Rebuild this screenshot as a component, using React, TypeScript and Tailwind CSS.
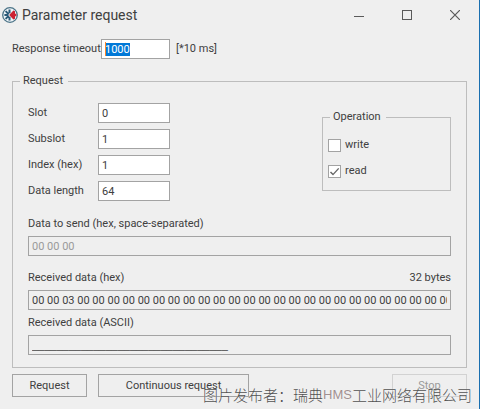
import React, { useEffect, useRef } from 'react';
import clsx from 'clsx';

const INPUT =
  'h-5 min-w-0 border border-[#a3a3a3] px-[3px] text-[11px] leading-[14px] outline-none rounded-none';
const BUTTON =
  'h-[23px] border border-[#a3a3a3] bg-[#efefef] text-center text-[11px] leading-4';

const NUMBER_FIELDS = [
  { id: 'slot', label: 'Slot', value: '0' },
  { id: 'subslot', label: 'Subslot', value: '1' },
  { id: 'index', label: 'Index (hex)', value: '1' },
  { id: 'length', label: 'Data length', value: '64' },
];

const RECEIVED = Array.from({ length: 32 }, (_, i) => (i === 2 ? '03' : '00')).join(' ');

function AppIcon() {
  return (
    <svg viewBox="0 0 16 16" className="h-4 w-4 shrink-0" aria-hidden="true">
      <circle cx="8" cy="8" r="7.3" fill="#eef3f6" stroke="#4b7387" strokeWidth="1.3" />
      <g stroke="#2b5a78" strokeWidth="2">
        <path d="M7.5 2.4V6.2M7.5 9.8v3.8M2.4 8h4.2M3.6 4.1l3 3M3.6 11.9l3-3" />
      </g>
      <path d="M7.2 8l4.2-4.6 1.6 0.8v2.6h1.4v2.4H13v2.6l-1.6 0.8z" fill="#cc2233" />
    </svg>
  );
}

function TitleBar() {
  return (
    <header className="flex h-[30px] items-center pl-[2px]">
      <AppIcon />
      <h1 className="ml-1 flex-1 text-[14px] leading-5">Parameter request</h1>
      <div className="flex h-7 text-[#5a5a5a]">
        <button type="button" aria-label="Minimize" className="flex w-12 items-center justify-center">
          <svg width="10" height="10" shapeRendering="crispEdges">
            <path d="M0 6.5h10" stroke="currentColor" />
          </svg>
        </button>
        <button type="button" aria-label="Maximize" className="flex w-12 items-center justify-center">
          <svg width="10" height="10" shapeRendering="crispEdges">
            <rect x="0.5" y="0.5" width="9" height="9" fill="none" stroke="currentColor" />
          </svg>
        </button>
        <button type="button" aria-label="Close" className="flex w-12 items-center justify-center">
          <svg width="10" height="10">
            <path d="M0 0l10 10M10 0L0 10" stroke="currentColor" strokeWidth="1.2" />
          </svg>
        </button>
      </div>
    </header>
  );
}

function Check({ label, checked }: { label: string; checked?: boolean }) {
  return (
    <label className="flex h-5 items-center gap-1">
      <span className="grid">
        <input
          type="checkbox"
          defaultChecked={checked}
          className="peer col-start-1 row-start-1 h-[13px] w-[13px] appearance-none border border-[#a3a3a3] bg-white"
        />
        <svg
          viewBox="0 0 13 13"
          className="pointer-events-none invisible col-start-1 row-start-1 h-[13px] w-[13px] peer-checked:visible"
        >
          <path d="M2.5 7l2.5 2.6L10.7 3.4" fill="none" stroke="#666" strokeWidth="1.4" />
        </svg>
      </span>
      {label}
    </label>
  );
}

interface DataFieldProps {
  id: string;
  label: string;
  value: string;
  note?: string;
  disabled?: boolean;
  className?: string;
  inputClassName?: string;
}

function DataField({ id, label, value, note, disabled, className, inputClassName }: DataFieldProps) {
  return (
    <div className={clsx('flex flex-col gap-1', className)}>
      <div className="flex justify-between">
        <label htmlFor={id}>{label}</label>
        {note && <span>{note}</span>}
      </div>
      <input
        id={id}
        defaultValue={value}
        readOnly
        disabled={disabled}
        className={clsx(INPUT, 'w-full bg-[#efefef] disabled:text-[#9a9a9a]', inputClassName)}
      />
    </div>
  );
}

export default function App() {
  const timeoutRef = useRef<HTMLInputElement>(null);

  useEffect(() => {
    timeoutRef.current?.focus();
    timeoutRef.current?.select();
  }, []);

  return (
    <main className="relative min-h-screen border-r border-[#1a6fb0] bg-[#efefef] font-[Roboto,sans-serif] text-[11px] leading-4 text-[#404040]">
      <TitleBar />

      <form className="px-3 pt-[9px] pb-3" onSubmit={(e) => e.preventDefault()}>
        <div className="flex items-center">
          <label htmlFor="timeout" className="w-[89px] whitespace-nowrap">
            Response timeout
          </label>
          <div className="relative flex">
            <input
              id="timeout"
              ref={timeoutRef}
              defaultValue="1000"
              className={clsx(INPUT, 'w-[69px] bg-white selection:bg-[#0078d7] selection:text-white')}
            />
            <span className="absolute top-[3px] left-1 h-[14px] w-px bg-[#ff8728]" />
          </div>
          <span className="ml-[6px]">[*10 ms]</span>
        </div>

        <fieldset className="mt-[14px] border border-[#bdbdbd] px-[15px] pt-[14px] pb-3">
          <legend className="-ml-2 pr-[5px] pl-[3px]">Request</legend>

          <div className="flex items-start justify-between">
            <div className="flex flex-col gap-[6px]">
              {NUMBER_FIELDS.map((field) => (
                <div key={field.id} className="flex items-center">
                  <label htmlFor={field.id} className="w-[70px]">
                    {field.label}
                  </label>
                  <input
                    id={field.id}
                    defaultValue={field.value}
                    className={clsx(INPUT, 'w-[72px] bg-white')}
                  />
                </div>
              ))}
            </div>

            <fieldset className="mt-[6px] w-[129px] border border-[#bdbdbd] pt-[10px] pr-[5px] pb-[9px] pl-[5px]">
              <legend className="ml-[2px] pr-[5px] pl-[3px]">Operation</legend>
              <div className="flex flex-col gap-[6px]">
                <Check label="write" />
                <Check label="read" checked />
              </div>
            </fieldset>
          </div>

          <DataField
            id="send"
            label="Data to send (hex, space-separated)"
            value="00 00 00"
            disabled
            className="mt-[15px]"
          />
          <DataField
            id="hex"
            label="Received data (hex)"
            note="32 bytes"
            value={RECEIVED}
            className="mt-[14px]"
          />
          <DataField
            id="ascii"
            label="Received data (ASCII)"
            value={'_'.repeat(32)}
            className="mt-[5px]"
            inputClassName="font-['Liberation_Sans',sans-serif]"
          />
        </fieldset>

        <div className="mt-[6px] flex">
          <button type="submit" className={clsx(BUTTON, 'w-[75px]')}>
            Request
          </button>
          <button type="button" className={clsx(BUTTON, 'ml-[11px] w-[151px]')}>
            Continuous request
          </button>
          <button
            type="button"
            disabled
            className={clsx(BUTTON, 'ml-auto w-[75px] border-[#d2d2d2] text-[#9a9a9a]')}
          >
            Stop
          </button>
        </div>
      </form>

      <p className="pointer-events-none absolute right-[7px] bottom-1 flex items-center font-['Noto_Sans_CJK_SC',sans-serif] text-[15px] leading-5 font-light whitespace-nowrap text-[#505050] text-shadow-[0_0_1px_#fff]">
        图片发布者：瑞典
        <span className="font-['Liberation_Sans',sans-serif] text-[13px] text-[#a08f8f]">HMS</span>
        工业网络有限公司
      </p>
    </main>
  );
}
